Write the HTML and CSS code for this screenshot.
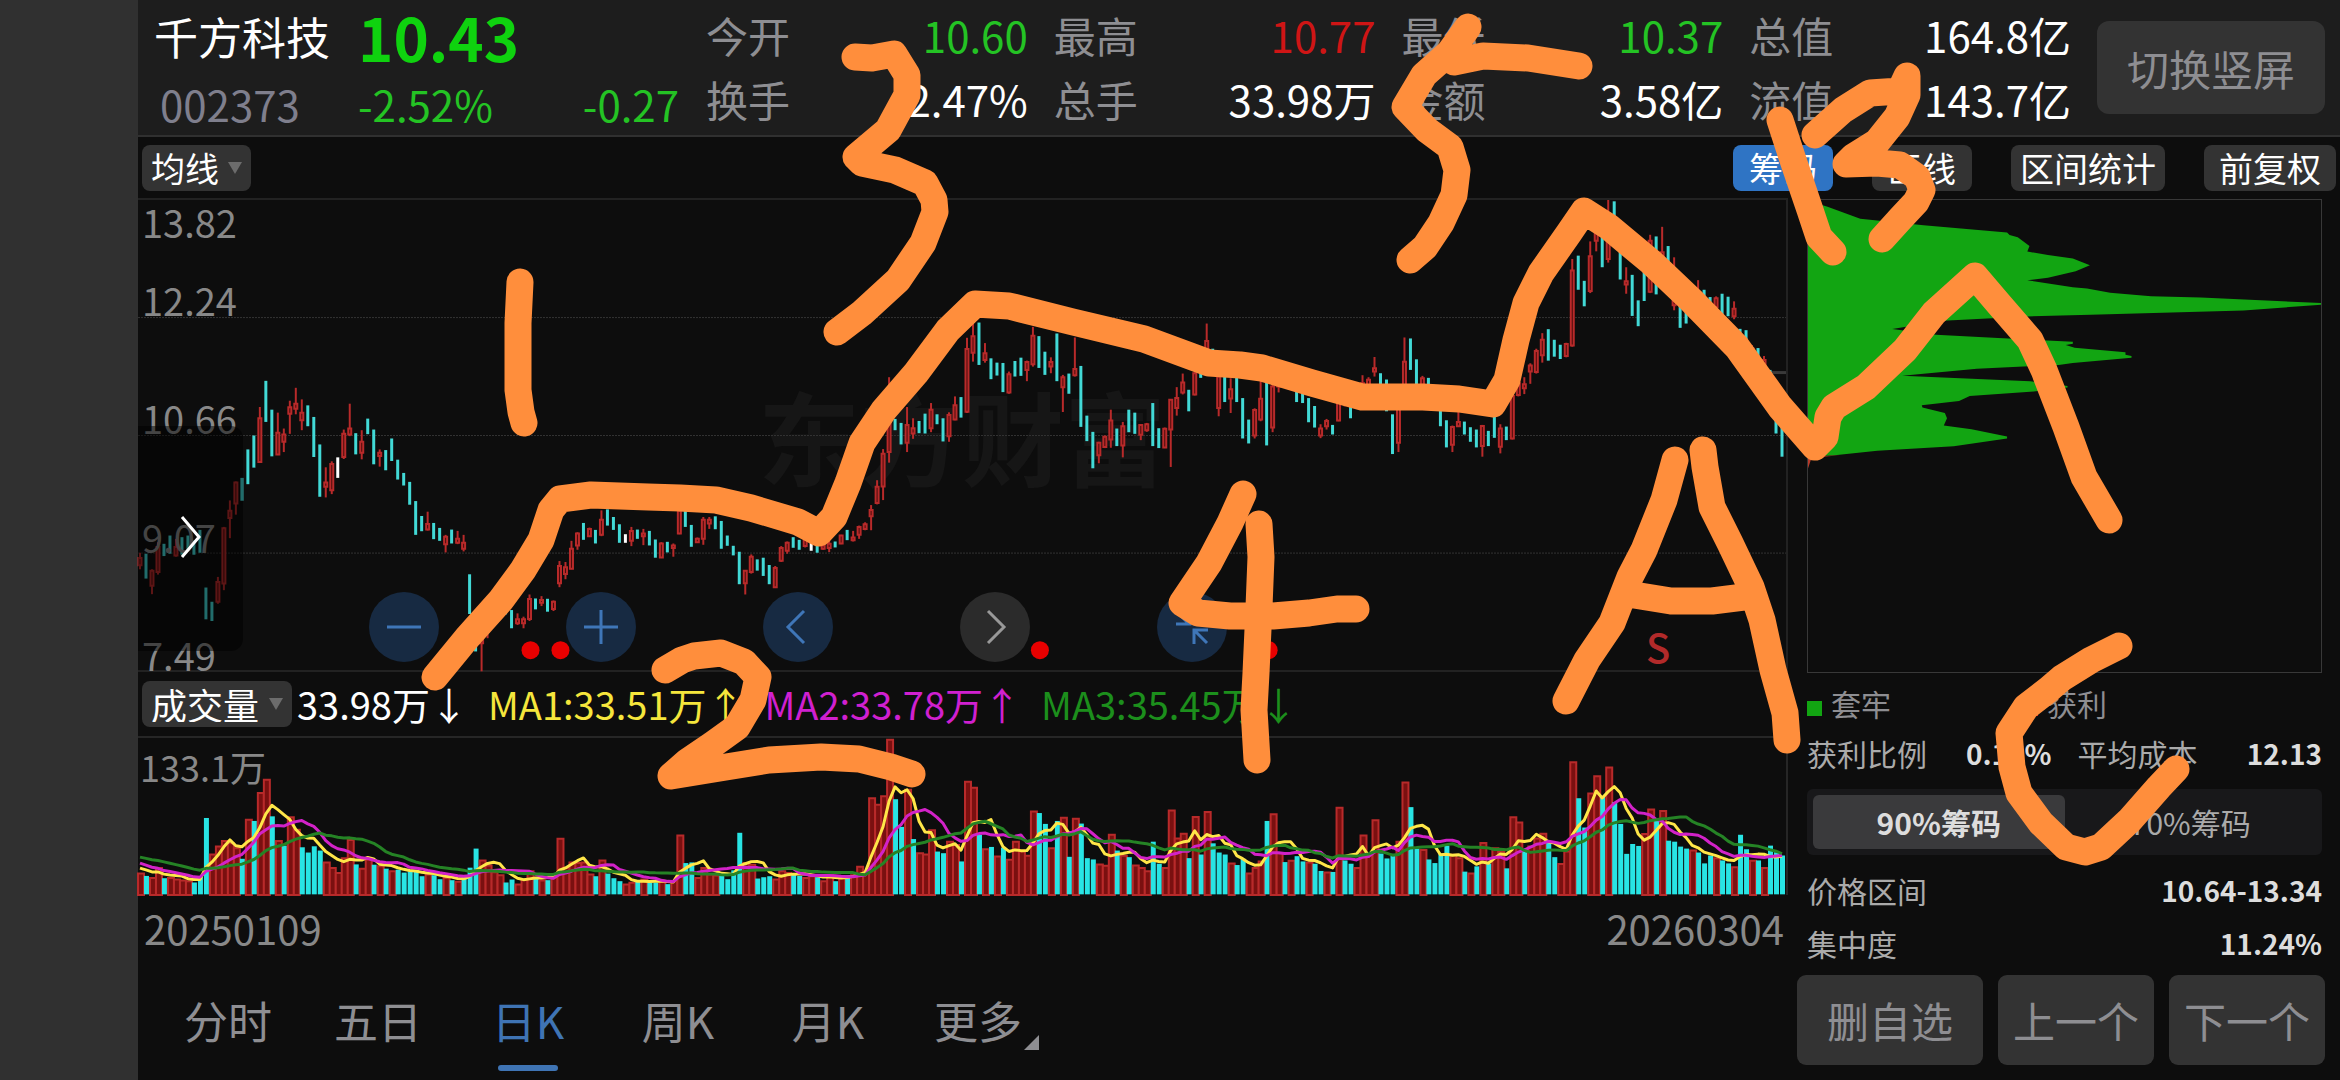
FILE: index.html
```
<!DOCTYPE html>
<html lang="zh-CN">
<head>
  <meta charset="UTF-8" />
  <meta name="viewport" content="width=device-width, initial-scale=1.0"/>
  <title>千方科技 002373</title>
  <link rel="stylesheet" href="styles.css">
</head>
<body>

<main class="app">
  <header class="quote">
    <div class="summary">
      <h1 class="name">千方科技</h1>
      <strong class="price">10.43</strong>
      <span class="code">002373</span>
      <span class="change"><span>-2.52%</span><span>-0.27</span></span>
    </div>
    <dl class="stats">
      <div><dt>今开</dt><dd class="down">10.60</dd></div>
      <div><dt>最高</dt><dd class="up">10.77</dd></div>
      <div><dt>最低</dt><dd class="down">10.37</dd></div>
      <div><dt>总值</dt><dd>164.8亿</dd></div>
      <div><dt>换手</dt><dd>2.47%</dd></div>
      <div><dt>总手</dt><dd>33.98万</dd></div>
      <div><dt>金额</dt><dd>3.58亿</dd></div>
      <div><dt>流值</dt><dd>143.7亿</dd></div>
    </dl>
    <button class="rotate" type="button">切换竖屏</button>
  </header>

  <nav class="toolbar">
    <span class="picker">
      <select class="select-line" aria-label="指标"><option>均线</option></select>
    </span>
    <div class="tools">
      <button class="active" type="button">筹码</button>
      <button type="button">画线</button>
      <button type="button">区间统计</button>
      <button type="button">前复权</button>
    </div>
  </nav>

  <div class="content">
    <section class="left">
      <div class="kline">
        <div class="watermark">东方财富</div>
        <svg id="kline" viewBox="0 27 1650 1419" preserveAspectRatio="none"></svg>
        <div class="axis">
          <div><span>13.82</span><span>12.24</span></div>
          <div><span>10.66</span></div>
          <div><span>9.07</span></div>
          <div><span>7.49</span></div>
        </div>
        <button class="drawer" type="button" aria-label="展开">
          <svg width="24" height="48" viewBox="0 0 24 48"><path d="M3 4L20 24L3 44"/></svg>
        </button>
        <div class="controls">
          <button type="button" aria-label="缩小"><svg viewBox="0 0 70 70"><path d="M18 35H52"/></svg></button>
          <button type="button" aria-label="放大"><svg viewBox="0 0 70 70"><path d="M18 35H52M35 18V52"/></svg></button>
          <button type="button" aria-label="左移"><svg viewBox="0 0 70 70"><path d="M41 19L25 35L41 51"/></svg></button>
          <button class="off" type="button" aria-label="右移"><svg viewBox="0 0 70 70"><path d="M28 19L44 35L28 51"/></svg></button>
          <button type="button" aria-label="收起"><svg viewBox="0 0 70 70"><path d="M18 18L32 32M19 32H33V18M50 51L37 38M37 52V38H51"/></svg></button>
        </div>
        <span class="sell">S</span>
      </div>

      <div class="vol-head">
        <span class="picker">
          <select class="select-vol" aria-label="副图指标"><option>成交量</option></select>
        </span>
        <span>33.98万↓</span>
        <span class="ma1">MA1:33.51万↑</span>
        <span class="ma2">MA2:33.78万↑</span>
        <span class="ma3">MA3:35.45万↓</span>
      </div>
      <div class="volume">
        <span>133.1万</span>
        <svg id="volume" viewBox="0 198 1650 477" preserveAspectRatio="none"></svg>
      </div>
      <div class="dates"><span>20250109</span><span>20260304</span></div>

      <nav class="tabs">
        <a href="#">分时</a>
        <a href="#">五日</a>
        <a class="active" href="#">日K</a>
        <a href="#">周K</a>
        <a href="#">月K</a>
        <a class="more" href="#">更多</a>
      </nav>
    </section>

    <aside class="right">
      <svg class="chips" viewBox="75 28 1443 1419" preserveAspectRatio="none">
        <path class="trapped" d="M75 30L130 48L222 84L400 104L635 126L642 133L665 140L698 166L692 183L750 193L820 204L868 224L828 242L750 262L692 269L820 290L860 294L925 307L1040 317L1180 321L1518 338V343L1300 360L870 373L690 378L455 391L312 416L435 433L610 443L820 454V460L800 464L825 472L968 486V493L985 497V502L820 518L780 524L550 535L340 556L700 573L805 587V592L710 604L530 617L500 632L395 645L397 652L460 668L466 684L457 706L535 717L635 739V745L485 768L270 782L150 795L75 800Z"/>
        <path class="profit" d="M75 800L165 795L85 803L75 835Z"/>
      </svg>
      <div class="chip-legend"><span>套牢</span><span class="gain">获利</span></div>
      <div class="pair">
        <div class="row"><span>获利比例</span><b>0.16%</b></div>
        <div class="row"><span>平均成本</span><b>12.13</b></div>
      </div>
      <div class="segment">
        <button class="active" type="button">90%筹码</button>
        <button type="button">70%筹码</button>
      </div>
      <div class="row tall"><span>价格区间</span><b>10.64-13.34</b></div>
      <div class="row tall"><span>集中度</span><b>11.24%</b></div>
      <div class="actions">
        <button type="button">删自选</button>
        <button type="button">上一个</button>
        <button type="button">下一个</button>
      </div>
    </aside>
  </div>
</main>

<!-- hand drawn wave count -->
<svg class="drawing" viewBox="0 0 2340 1080" preserveAspectRatio="none">
  <path d="M435 677L467 638L501 600L523 570L541 540L551 510L560 499L591 495L648 497L680 498L716 500L751 508L798 522L819 533L834 517L848 483L862 443L884 410L916 373L948 330L975 304L1009 306L1073 322L1144 339L1209 363L1240 365L1262 368L1312 383L1362 397L1423 397L1459 399L1493 404L1507 380L1516 340L1526 303L1541 273L1569 233L1584 211L1609 227L1651 262L1691 300L1737 347L1780 407L1815 447L1825 437L1828 417L1834 407L1866 387L1905 350L1934 313L1975 276L1998 303L2030 340L2044 370L2066 427L2084 477L2109 520"/>
  <path d="M520 282L518 323L518 390L521 412L524 423"/>
  <path d="M855 57L872 58L894 54L907 75L907 95L888 130L856 157L862 163L895 170L925 183L934 200L935 212L923 243L898 280L862 313L837 332"/>
  <path d="M665 670L682 660L694 656L721 653L744 662L758 677L753 700L737 727L712 745L687 762L671 776L726 767L769 760L821 757L859 759L891 767L912 774"/>
  <path d="M1243 494L1230 523L1209 563L1182 603L1198 613L1230 616L1273 616L1309 613L1337 609L1356 609M1259 524L1261 557L1259 607L1256 673L1254 710L1257 760"/>
  <path d="M1468 27L1450 52L1424 75L1405 107L1427 130L1450 147L1457 170L1454 195L1441 223L1425 247L1410 260M1454 62L1483 56L1528 58L1579 66"/>
  <path d="M1780 120L1793 160L1810 210L1819 237L1833 252M1815 135L1843 110L1870 93L1900 91L1907 76V95L1897 117L1877 142L1853 157L1846 164L1877 163L1900 165L1917 177L1922 190L1916 202L1901 218L1882 239"/>
  <path d="M1675 460L1664 500L1644 550L1630 577L1612 623L1587 660L1566 701M1703 450L1705 467L1712 507L1730 543L1751 587L1762 620L1773 670L1785 713L1787 740M1634 595L1671 601L1712 601L1744 597"/>
  <path d="M2119 646L2091 660L2062 678L2048 690L2026 707L2009 733L2012 767L2019 793L2041 823L2066 847L2085 852L2101 847L2130 820L2159 787L2176 769"/>
</svg>

<script src="chart.js"></script>
</body>
</html>
```

FILE: styles.css
```
* {
  box-sizing: border-box;
}
body {
  margin: 0;
  min-height: 100vh;
  display: flex;
  position: relative;
  padding-left: 138px;
  background: #303030;
  color: #fff;
  font-family: "Noto Sans CJK SC", "Noto Sans", sans-serif;
  font-size: 40px;
  line-height: 1;
}
button, select {
  font: inherit;
  color: inherit;
  border: none;
  padding: 0;
  cursor: pointer;
}
.app {
  flex: 1;
  min-width: 0;
  display: flex;
  flex-direction: column;
  background: #0d0d0d;
}

/* header */
.quote {
  display: grid;
  grid-template-columns: 568fr 1365fr 254fr;
  height: 137px;
  padding-right: 15px;
  background: #1d1d1d;
  border-bottom: 2px solid #303030;
  font-size: 42px;
}
.summary {
  display: grid;
  grid-template-columns: 204px 1fr;
  grid-template-rows: 72px 63px;
  align-items: center;
  padding-left: 16px;
}
.name {
  margin: 0;
  font-size: 44px;
  font-weight: 400;
  line-height: 50px;
  white-space: nowrap;
}
.price {
  font-size: 60px;
  font-weight: 700;
  color: #0fd20f;
}
.code {
  padding-left: 6px;
  color: #7f7f8d;
}
.change {
  display: flex;
  justify-content: space-between;
  padding-right: 27px;
  color: #24c324;
}
.stats {
  display: grid;
  grid-template-columns: repeat(4, 1fr);
  grid-template-rows: 64px 64px;
  column-gap: 26px;
  margin: 0;
  padding-top: 3px;
}
.stats div {
  display: flex;
  justify-content: space-between;
  align-items: center;
}
.stats dt {
  color: #8e8e92;
}
.stats dd {
  margin: 0;
}
.stats .down {
  color: #24c324;
}
.stats .up {
  color: #cf1515;
}
.rotate {
  height: 93px;
  margin: 21px 0 0 26px;
  border-radius: 12px;
  background: #333;
  color: #8e8e92;
}

/* toolbar */
.toolbar {
  display: flex;
  justify-content: space-between;
  align-items: center;
  height: 61px;
  padding: 0 4px;
  font-size: 34px;
}
.picker {
  position: relative;
  display: inline-flex;
}
.picker::after {
  content: "";
  position: absolute;
  right: 9px;
  top: 17px;
  border: 7px solid transparent;
  border-top: 12px solid #6c6c6c;
  border-bottom: none;
  pointer-events: none;
}
.picker select {
  appearance: none;
  height: 46px;
  padding-left: 9px;
  border-radius: 8px;
  background: #333;
}
.select-line {
  width: 109px;
}
.select-vol {
  width: 150px;
}
.tools {
  display: flex;
  gap: 39px;
}
.tools button {
  height: 46px;
  padding: 0 9px;
  min-width: 100px;
  border-radius: 8px;
  background: #333;
}
.tools button:last-child {
  padding: 0 15px;
}
.tools .active {
  background: #2f74c4;
}

/* charts */
.content {
  flex: 1;
  display: grid;
  grid-template-columns: 1650fr 552fr;
}
.left, .right {
  display: flex;
  flex-direction: column;
  min-width: 0;
}
.kline {
  position: relative;
  flex: 1;
  min-height: 300px;
  border: 2px solid #222;
  border-left: none;
}
.kline > svg, .volume svg {
  position: absolute;
  inset: 0;
  width: 100%;
  height: 100%;
  overflow: visible;
}
.watermark {
  position: absolute;
  inset: 0;
  display: flex;
  align-items: center;
  justify-content: center;
  font-size: 102px;
  font-weight: 700;
  color: #161616;
}
.axis {
  position: absolute;
  inset: 0 0 -4px;
  display: grid;
  grid-template-rows: repeat(4, 1fr);
  padding-left: 4px;
  font-size: 38px;
  color: #888;
}
.axis div {
  display: flex;
  flex-direction: column;
  justify-content: flex-end;
}
.axis div:first-child {
  justify-content: space-between;
  padding-top: 3px;
}
.drawer {
  position: absolute;
  left: 0;
  top: 48%;
  width: 105px;
  height: 225px;
  border-radius: 0 12px 12px 0;
  background: rgba(0, 0, 0, 0.5);
}
.drawer path {
  fill: none;
  stroke: #fff;
  stroke-width: 3;
}
.controls {
  position: absolute;
  left: 14%;
  bottom: 8px;
  display: flex;
  gap: 127px;
}
.controls button {
  width: 70px;
  height: 70px;
  border-radius: 50%;
  background: #172a42;
}
.controls .off {
  background: #2b2b2b;
}
.controls svg {
  display: block;
}
.controls path {
  fill: none;
  stroke: #3f76b8;
  stroke-width: 3;
}
.controls .off path {
  stroke: #999;
}
.sell {
  position: absolute;
  left: 91.5%;
  bottom: 4px;
  font-weight: 500;
  color: #b22a2a;
}
.grid {
  stroke: #333;
  stroke-width: 1;
  stroke-dasharray: 2 1;
}
.last {
  stroke: #3a3a3a;
  stroke-width: 3;
}
.event {
  stroke: #e80000;
  stroke-width: 18;
  stroke-linecap: round;
}
.event, .grid, .last, .wick, .body, .line {
  fill: none;
  vector-effect: non-scaling-stroke;
}
.wick {
  stroke-width: 2;
}
.wick.c {
  stroke: #42d9d6;
  stroke-width: 3;
}
.wick.w {
  stroke: #fff;
  stroke-width: 3;
}
.wick.r, .body {
  stroke: #b82a2a;
}
.body {
  stroke-width: 2;
  fill: #4a0c0c;
}
.bar-r {
  fill: #7a1010;
  stroke: #b82a2a;
  stroke-width: 2;
  vector-effect: non-scaling-stroke;
}
.bar-c {
  fill: #28e4e4;
}
.line {
  stroke-width: 3;
  stroke-linejoin: round;
}
.line-5 {
  stroke: #ffe648;
}
.line-10 {
  stroke: #d222c8;
}
.line-20 {
  stroke: #258325;
}

.vol-head {
  display: flex;
  align-items: center;
  height: 64px;
  padding-left: 4px;
  gap: 20px;
  font-size: 38px;
  white-space: nowrap;
}
.vol-head .picker {
  margin-right: -15px;
  font-size: 36px;
}
.ma1 {
  color: #f5e63c;
}
.ma2 {
  color: #d020d0;
}
.ma3 {
  color: #1c8f1c;
}
.volume {
  position: relative;
  height: 159px;
  padding: 10px 2px;
  border-top: 2px solid #262626;
  border-right: 2px solid #262626;
  font-size: 36px;
  color: #888;
}
.dates {
  display: flex;
  justify-content: space-between;
  height: 64px;
  padding: 13px 4px 0 6px;
  color: #888;
}

/* period tabs */
.tabs {
  display: flex;
  height: 121px;
  padding-left: 15px;
  font-size: 44px;
}
.tabs a {
  position: relative;
  width: 150px;
  height: 112px;
  padding-top: 39px;
  text-align: center;
  text-decoration: none;
  color: #8e8e92;
}
.tabs .active {
  color: #3f74b4;
}
.tabs .active::after {
  content: "";
  position: absolute;
  left: 45px;
  bottom: 0;
  width: 60px;
  height: 6px;
  border-radius: 3px;
  background: #3f74b4;
}
.tabs .more::after {
  content: "";
  position: absolute;
  right: 14px;
  bottom: 21px;
  border-left: 15px solid transparent;
  border-bottom: 15px solid #8e8e92;
}

/* chip panel */
.right {
  padding: 1px 0 15px 19px;
  font-size: 30px;
  color: #aaa;
}
.right > div {
  margin-right: 18px;
}
.chips {
  flex: 1 1 0px;
  height: 0;
  width: calc(100% - 18px);
  border: 1px solid #383838;
}
.trapped {
  fill: #12a512;
}
.profit {
  fill: #b83a2a;
}
.chip-legend {
  display: grid;
  grid-template-columns: 216fr 299fr;
  height: 57px;
  align-items: center;
  padding-top: 2px;
  color: #8e8e92;
}
.chip-legend span::before {
  content: "";
  display: inline-block;
  width: 15px;
  height: 15px;
  margin-right: 9px;
  background: #12a512;
}
.chip-legend .gain::before {
  background: #e01818;
}
.pair {
  display: grid;
  grid-template-columns: 1fr 1fr;
  column-gap: 26px;
  height: 59px;
}
.row {
  display: flex;
  justify-content: space-between;
  align-items: center;
  height: 46px;
}
.row b {
  font-size: 28px;
  color: #ddd;
}
.segment {
  display: flex;
  height: 66px;
  padding: 6px;
  border-radius: 6px;
  background: #18181a;
}
.segment button {
  flex: 1;
  border-radius: 6px;
  background: none;
}
.segment .active {
  background: #3a3a3c;
  color: #ddd;
  font-weight: 700;
}
.tall {
  height: 53px;
}
.segment + .tall {
  margin-top: 8px;
}
.right .actions {
  display: grid;
  grid-template-columns: 186fr 156fr 156fr;
  gap: 15px;
  margin: 6px 15px 0 -10px;
  font-size: 42px;
}
.actions button {
  height: 90px;
  border-radius: 9px;
  background: #333;
  color: #8e8e92;
}

/* drawing layer on top of everything */
.drawing {
  position: absolute;
  inset: 0;
  width: 100%;
  height: 100%;
  pointer-events: none;
}
.drawing path {
  fill: none;
  stroke: #ff8e3c;
  stroke-width: 27;
  stroke-linecap: round;
  stroke-linejoin: round;
}
```

FILE: chart.js
```
// c/w: high,low   r: high,body top,body bottom,low (chart units, y down)
const candles = `
r1092,1108,1130,1142 c1095,1170 r1142,1146,1192,1217 r1060,1075,1150,1158 c1065,1102
c1040,1095 r1050,1075,1100,1104 c1045,1098 c1040,1085 c1055,1098
c1023,1092 c1197,1293 c1240,1298 r1165,1180,1240,1246 r1014,1018,1185,1205
r934,965,987,1048 r877,880,943,977 c866,935 c780,885 c738,835
r652,686,818,818 c573,697 c660,801 r669,730,795,797 r717,735,757,788
r633,653,672,733 r594,642,657,674 r629,669,692,722 c647,710 c682,803
c765,923 r834,880,893,925 r816,824,903,915 w804,866 r720,733,803,809
r642,717,735,740 c731,795 r722,757,790,810 c687,734 c720,825
r780,790,800,832 c782,843 c747,815 c811,871 c851,889
c878,947 c936,1038 c981,1027 r968,1005,1022,1025 c1002,1051
c1017,1056 r1038,1044,1066,1091 c1022,1064 r1026,1050,1062,1066 r1038,1062,1080,1088
c1157,1277 c1290,1390 r1300,1345,1365,1450 r1250,1280,1330,1350 r1230,1250,1290,1300
c1230,1280 c1240,1278 c1265,1320 r1275,1293,1305,1310 r1285,1293,1305,1320
r1218,1232,1292,1298 c1230,1263 r1223,1235,1243,1253 c1231,1270 r1236,1240,1262,1268
r1117,1132,1184,1196 r1120,1136,1156,1172 r1056,1080,1140,1142 r1030,1034,1070,1083 c1002,1053
r1016,1020,1042,1044 c1023,1064 r964,992,1038,1042 c961,1010 c984,1023
c1006,1062 w1036,1062 r1014,1026,1056,1072 c1022,1050 r1020,1034,1042,1069
c1026,1070 c1052,1107 r1060,1064,1106,1108 c1059,1091 r1064,1070,1078,1104
r950,965,1034,1036 c955,1014 c1008,1074 r1046,1050,1060,1062 r984,992,1050,1068
r984,992,1004,1020 c982,1021 c996,1080 c1040,1071 c1071,1100
c1089,1187 r1144,1146,1184,1218 r1097,1104,1150,1155 c1112,1146 c1107,1162
c1129,1187 r1132,1138,1196,1198 r1072,1078,1116,1120 r1058,1062,1086,1095 c1045,1077
c1053,1083 r1030,1040,1072,1076 w1050,1086 c1060,1092 r1060,1070,1080,1083
r1055,1065,1078,1090 c1058,1076 r1038,1040,1064,1066 c1023,1054 r1026,1046,1054,1058
r1010,1014,1038,1050 r1000,1006,1020,1024 r948,963,982,1024 r873,893,942,946 r779,793,892,933
r562,700,788,820 c688,722 c700,765 r652,706,760,788 r686,716,732,748
c694,731 c672,732 r640,660,716,728 c674,704 c686,756
r668,676,740,757 r620,647,690,692 c622,684 r443,477,666,670 r380,438,488,515
c397,525 r459,490,510,518 c505,568 c518,557 c519,607
r545,553,608,612 c513,560 c503,558 r512,516,540,574 r410,437,523,530
c438,534 c485,555 r502,516,530,550 c430,574 r555,562,592,667
c551,612 r442,537,556,560 c528,712 c678,755 c727,837
r757,760,798,822 r738,742,773,776 r660,693,750,775 c717,770 r697,710,768,804
c660,728 c669,733 r704,706,736,752 r700,704,722,727 c640,770
c716,776 r714,718,774,776 r628,630,720,833 r592,625,655,678 r551,578,608,614
c600,665 r545,550,614,617 c540,564 r400,453,490,500 c476,520
r555,560,655,680 c560,637 r565,598,626,670 c560,637 c625,747
c690,762 r656,661,738,747 r570,627,690,695 c575,768 r585,590,714,728
r560,570,590,608 c560,580 c570,590 c590,637 c600,640
c625,698 c649,714 r704,717,738,746 r688,694,710,720 c706,735
r635,640,693,695 r600,610,640,650 c610,686 c600,640 r556,580,630,640
r562,570,610,620 r501,535,545,560 c550,600 c569,665 c674,794
r640,650,760,788 r442,515,640,645 c445,540 c508,585 r558,565,585,590
c564,600 r590,600,640,650 c640,710 c692,774 r708,712,766,788
r660,697,710,712 c696,735 c713,757 c720,774 r706,709,770,802
c724,770 c680,745 r704,717,772,792 c711,752 r615,619,747,750
r565,580,616,620 r562,583,595,613 r520,527,545,582 r476,483,546,551 r429,449,496,518
c417,512 c449,500 c464,507 r458,462,498,502 r205,240,466,470
c195,298 c271,348 r152,197,302,308 r100,120,150,182 c110,230
r27,80,205,216 c31,120 c150,267 r230,272,282,310 c253,377
c330,408 c240,332 r132,150,304,308 c137,312 r108,185,250,260
c166,260 r200,240,345,360 c330,413 c350,400 r310,330,350,380
r269,310,330,340 c298,340 c320,360 r318,324,350,360 c310,378
c319,378 r333,355,378,387 c416,440 c420,470 r465,475,500,510
c474,510 r498,510,535,545 c540,640 c600,732 c700,802`;

const volumes = `
r607 c617 r620 r590 c624 r620 r625 r628 r630 c637 c620 c441 r549 r525 r508 r515 r530 c565 r443 c450
r362 r322 c436 r508 c525 r436 r474 c530 c546 c527 c540 r573 r590 r605 r560 r505 c582 r592 r565 c583
r585 c595 r600 c598 c607 c603 c603 c618 r610 c615 c627 r620 c630 r632 c620 c592 c534 r567 r582 r603
r612 c637 c628 r640 r625 r600 c625 r628 c630 r615 r501 r590 r573 r575 r573 r610 c618 r567 c610 c624
c633 r640 r635 c633 r625 c637 c637 r630 c642 r630 r491 c578 c576 r620 r590 r610 r613 c612 c627 c600
c486 r575 r580 c625 c621 c618 r625 r600 r605 c610 c617 r620 r615 c621 r630 r612 c633 r620 c615 r612
r586 r600 r378 r398 r372 r200 c384 c468 r352 c505 r545 r549 r475 c543 c548 r510 r520 c573 r328 r346
c492 r533 c529 r555 c531 r565 r510 r540 r553 r418 c426 c459 r530 c450 r437 c559 r440 c458 c563 c567
r579 r583 r489 c540 r553 c560 r582 r590 r600 c513 c580 r590 r415 r500 r486 c563 r435 c552 r420 c518
c546 c552 r576 c584 c565 r607 r590 r570 c450 r427 r545 c575 r568 c557 c573 r573 c580 c602 r604 c605
r407 c570 c580 r590 r491 r550 r445 c549 c564 c550 r510 r330 c408 c534 r535 c567 c578 c550 c525 r550
r560 c604 r607 c588 r514 c580 r530 r540 c594 r436 r452 c540 r525 r500 r486 c516 c560 r578 r540 r269
c381 c470 r364 r311 c375 r285 c393 c459 c550 c520 c526 r487 r412 c450 r417 c510 c513 c528 c534 r537
c546 c579 c555 r560 c570 c579 r588 c492 c536 r568 c570 r590 c525 c545 c555`;

const STEP = 6;

function parse(text) {
  return text.trim().split(/\s+/).map(s => ({ kind: s[0], v: s.slice(1).split(',').map(Number) }));
}

function drawKline() {
  let out = '';
  [382, 738, 1093].forEach(y => { out += `<path class="grid" d="M0 ${y}H1650"/>`; });
  out += '<path class="last" d="M1632 548H1650"/>';

  parse(candles).forEach((k, i) => {
    const x = 2 + i * STEP;
    const v = k.v;
    out += `<path class="wick ${k.kind}" d="M${x} ${v[0]}V${v[v.length - 1]}"/>`;
    if (k.kind === 'r') {
      out += `<path class="body" d="M${x - 1.5} ${v[1]}h3V${v[2]}h-3Z"/>`;
    }
  });

  [393, 423, 903, 1132].forEach(x => { out += `<path class="event" d="M${x} 1386h0.01"/>`; });
  document.getElementById('kline').innerHTML = out;
}

function drawVolume() {
  const bars = parse(volumes);
  let out = '';
  bars.forEach((b, i) => {
    const x = i * STEP;
    const top = b.v[0];
    if (b.kind === 'r') {
      out += `<rect class="bar-r" x="${x}" y="${top + 3}" width="6" height="${672 - top}"/>`;
    } else {
      out += `<rect class="bar-c" x="${x}" y="${top}" width="5" height="${673 - top}"/>`;
    }
  });

  // bars before the first visible day, needed by the averages
  const before = [...Array(10).fill(540), ...Array(5).fill(556), ...Array(5).fill(590)];
  const tops = before.concat(bars.map(b => b.v[0]));
  [5, 10, 20].forEach(n => {
    const points = bars.map((b, i) => {
      const part = tops.slice(i + 21 - n, i + 21);
      const avg = part.reduce((a, c) => a + c, 0) / n;
      return `${i * STEP + 2},${avg.toFixed(1)}`;
    });
    out += `<polyline class="line line-${n}" points="${points.join(' ')}"/>`;
  });
  document.getElementById('volume').innerHTML = out;
}

drawKline();
drawVolume();
```
